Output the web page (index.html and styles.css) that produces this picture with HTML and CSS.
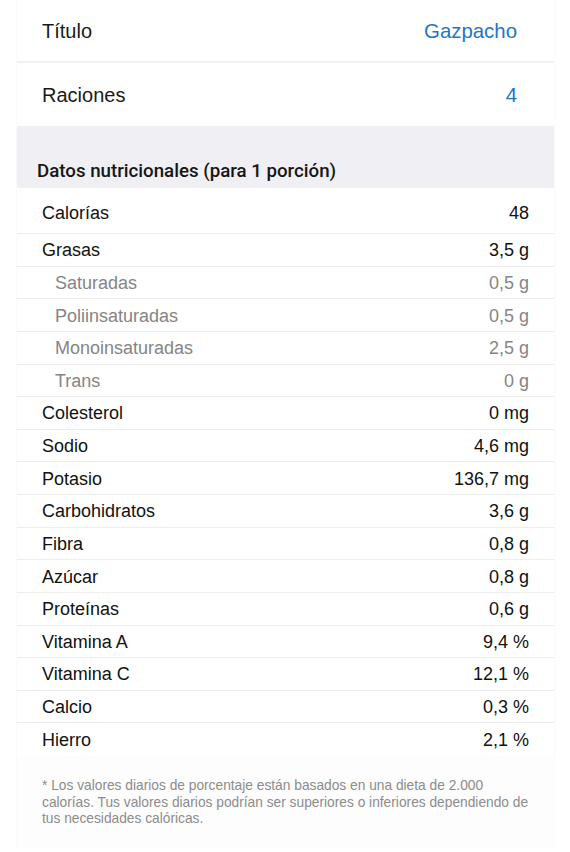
FILE: index.html
```html
<!DOCTYPE html>
<html lang="es">
<head>
<meta charset="utf-8">
<link rel="stylesheet" href="styles.css">
</head>
<body>
<div class="card">
  <div class="top-row"><span class="label">Título</span><span class="value">Gazpacho</span></div>
  <div class="top-row"><span class="label">Raciones</span><span class="value">4</span></div>
  <div class="section-header">Datos nutricionales (para 1 porción)</div>
  <div class="rows">
    <div class="row first"><span>Calorías</span><span>48</span></div>
    <div class="row"><span>Grasas</span><span>3,5 g</span></div>
    <div class="row sub"><span>Saturadas</span><span>0,5 g</span></div>
    <div class="row sub"><span>Poliinsaturadas</span><span>0,5 g</span></div>
    <div class="row sub"><span>Monoinsaturadas</span><span>2,5 g</span></div>
    <div class="row sub"><span>Trans</span><span>0 g</span></div>
    <div class="row"><span>Colesterol</span><span>0 mg</span></div>
    <div class="row"><span>Sodio</span><span>4,6 mg</span></div>
    <div class="row"><span>Potasio</span><span>136,7 mg</span></div>
    <div class="row"><span>Carbohidratos</span><span>3,6 g</span></div>
    <div class="row"><span>Fibra</span><span>0,8 g</span></div>
    <div class="row"><span>Azúcar</span><span>0,8 g</span></div>
    <div class="row"><span>Proteínas</span><span>0,6 g</span></div>
    <div class="row"><span>Vitamina A</span><span>9,4 %</span></div>
    <div class="row"><span>Vitamina C</span><span>12,1 %</span></div>
    <div class="row"><span>Calcio</span><span>0,3 %</span></div>
    <div class="row last"><span>Hierro</span><span>2,1 %</span></div>
  </div>
  <p class="footnote">* Los valores diarios de porcentaje están basados en una dieta de 2.000<br>calorías. Tus valores diarios podrían ser superiores o inferiores dependiendo de<br>tus necesidades calóricas.</p>
</div>
</body>
</html>
```

FILE: styles.css
```css
* { box-sizing: border-box; }
html, body { margin: 0; padding: 0; background: #ffffff; }
body {
  font-family: "Liberation Sans", Arial, sans-serif;
  color: #111111;
}
.card {
  margin: 0 15px 0 16px;
  background: #ffffff;
  border-left: 1px solid #fafafa;
  border-right: 1px solid #fafafa;
  min-height: 840px;
}
.top-row {
  display: flex;
  justify-content: space-between;
  align-items: center;
  height: 63px;
  padding: 2px 37px 0 25px;
  font-size: 20px;
  color: #1a1a1a;
}
.top-row:first-child {
  border-bottom: 2px solid #f1f1f3;
  height: 63px;
}
.top-row .value { color: #1d77c2; font-size: 20.4px; }
.section-header {
  background: #efeff4;
  height: 62px;
  display: flex;
  align-items: flex-end;
  padding: 0 0 6px 20px;
  font-family: Roboto, "Liberation Sans", sans-serif;
  font-weight: 500;
  font-size: 18.7px;
  color: #161616;
}
.rows { display: flex; flex-direction: column; }
.row {
  display: flex;
  justify-content: space-between;
  align-items: center;
  height: 32.625px;
  padding: 2px 25px 0 25px;
  border-bottom: 1px solid #ededed;
  font-size: 18px;
  color: #111111;
}
.row.first {
  height: 46px;
  padding-top: 5px;
}
.row.sub {
  padding-left: 38px;
  color: #858585;
}
.row.last { border-bottom: none; }
.footnote {
  margin: 0;
  padding: 22px 16px 20px 25px;
  font-size: 13.75px;
  line-height: 16.5px;
  color: #8c8c8c;
  background: #fdfdfd;
}
```
